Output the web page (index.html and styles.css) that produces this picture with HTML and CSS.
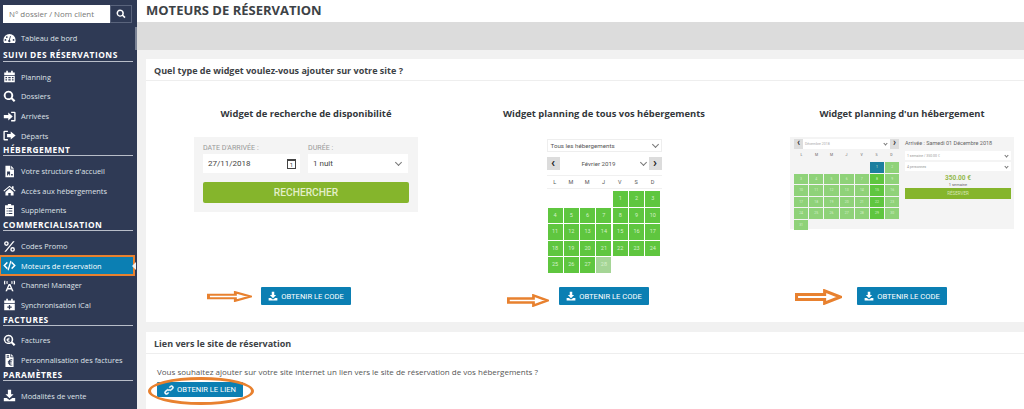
FILE: index.html
```html
<!DOCTYPE html>
<html lang="fr">
<head>
<meta charset="UTF-8" />
<title>Moteurs de réservation</title>
<link rel="stylesheet" href="styles.css">
</head>
<body>
<svg class="sprite" aria-hidden="true">
  <symbol id="i-search" viewBox="0 0 16 16"><path d="M6.7 1a5.7 5.7 0 1 0 3.3 10.3l3.4 3.5 1.9-1.9-3.5-3.4A5.7 5.7 0 0 0 6.7 1zm0 2.2a3.5 3.5 0 1 1 0 7 3.5 3.5 0 0 1 0-7z"/></symbol>
  <symbol id="i-gauge" viewBox="0 0 16 16"><path d="M8 2.5A7.5 7.5 0 0 0 .5 10c0 1.300.3 2.400.9 3.500h13.200c.6-1.100.9-2.200.9-3.500A7.500 7.500 0 0 0 8 2.500zM3 10.800a1.100 1.100 0 1 1 0-2.200 1.100 1.100 0 0 1 0 2.200zm1.700-3.500a1.100 1.100 0 1 1 0-2.200 1.100 1.100 0 0 1 0 2.200zM8 12.700a1.600 1.600 0 0 1-.6-3.100l1.300-4.800 1 .3-1.300 4.700A1.600 1.600 0 0 1 8 12.700zm5-1.900a1.100 1.100 0 1 1 0-2.200 1.100 1.100 0 0 1 0 2.200z"/></symbol>
  <symbol id="i-calendar" viewBox="0 0 16 16"><path d="M4 1h2v2h4V1h2v2h2.500v3h-13V3H4zM1.500 7h13v8h-13zM3 8.500V10h2V8.500zm3.500 0V10h3V8.500zm4.500 0V10h2V8.500zM3 11.500V13h2v-1.500zm3.500 0V13h3v-1.500zm4.500 0V13h2v-1.500z"/></symbol>
  <symbol id="i-in" viewBox="0 0 16 16"><path d="M6.500 3v3H1v4h5.500v3L12 8zM10 2h4a1.500 1.500 0 0 1 1.500 1.500v9A1.500 1.500 0 0 1 14 14h-4v-1.700h3.800V3.700H10z"/></symbol>
  <symbol id="i-out" viewBox="0 0 16 16"><path d="M9.500 3v3H5v4h4.500v3L15.500 8zM6 2H2A1.500 1.500 0 0 0 .5 3.500v9A1.500 1.500 0 0 0 2 14h4v-1.700H2.200V3.700H6z"/></symbol>
  <symbol id="i-file" viewBox="0 0 16 16"><path d="M3 1h6v4.500h4.500V15H3zM10 1l3.500 3.500H10zM5 8v5h1.200v-1.500h1.500v1.500h1V8zm5 3v2h2v-2z"/></symbol>
  <symbol id="i-home" viewBox="0 0 16 16"><path d="M8 2 .5 8.300l.9 1L8 3.800l6.600 5.500.9-1L13 6.200V2.800h-2v1.700zM3 9.800V14h3.500v-3h3v3H13V9.800L8 5.500z"/></symbol>
  <symbol id="i-list" viewBox="0 0 16 16"><path d="M6 0h4v1.500h3.500V15h-11V1.500H6zM4.500 5v1.200h1.200V5zm2.300 0v1.200h4.700V5zM4.500 8v1.200h1.200V8zm2.300 0v1.200h4.700V8zm-2.300 3v1.200h1.200V11zm2.300 0v1.200h4.700V11z"/></symbol>
  <symbol id="i-percent" viewBox="0 0 16 16"><path d="M4.200 1.500a2.900 2.900 0 1 1 0 5.800 2.900 2.900 0 0 1 0-5.800zm0 1.700a1.200 1.200 0 1 0 0 2.400 1.200 1.200 0 0 0 0-2.400zM11.800 8.700a2.900 2.900 0 1 1 0 5.800 2.900 2.900 0 0 1 0-5.800zm0 1.700a1.200 1.200 0 1 0 0 2.400 1.200 1.200 0 0 0 0-2.400zM12.300 1.500h2L3.700 14.500h-2z"/></symbol>
  <symbol id="i-code" viewBox="0 0 16 16"><path d="M4.800 3.500 6 4.800 2.800 8 6 11.200l-1.200 1.300L.3 8zM11.200 3.500 10 4.800 13.200 8 10 11.200l1.200 1.300L15.700 8zM9 2l1.500.4L7 14l-1.500-.4z"/></symbol>
  <symbol id="i-antenna" viewBox="0 0 16 16"><path d="M6.900 6h2.200L13 15h-2l-.7-2H5.700L5 15H3zM8 8l-1.500 3h3zM1.500 2 3 2.300C2.500 3.800 2.500 5 3 6.500L1.500 6.800C1 5 1 3.700 1.500 2zM14.500 2c.5 1.700.5 3 0 4.800L13 6.500c.5-1.500.5-2.700 0-4.200zM4.500 2.500l1.300.3c-.3 1-.3 1.900 0 2.900l-1.300.3c-.4-1.300-.4-2.300 0-3.500zM11.500 2.500c.4 1.200.4 2.200 0 3.500l-1.300-.3c.3-1 .3-1.900 0-2.900z"/></symbol>
  <symbol id="i-sync" viewBox="0 0 16 16"><path d="M4 1h2v2h4V1h2v2h2.500v3h-13V3H4zM1.500 7h13v8h-13zM7.200 8.500v2H5.300v1.400h1.900v2h1.600v-2h1.900v-1.400H8.800v-2z"/></symbol>
  <symbol id="i-euro" viewBox="0 0 16 16"><path d="M6.700 1a5.700 5.700 0 1 0 3.300 10.300l3.400 3.500 1.900-1.900-3.500-3.400A5.700 5.700 0 0 0 6.700 1zm0 1.800a3.900 3.900 0 1 1 0 7.800 3.900 3.900 0 0 1 0-7.800zM7.500 4.500C6.200 4.500 5.300 5.200 5 6.200h-.7V7h.6v.6h-.6v.7H5c.3 1 1.200 1.700 2.500 1.700.4 0 .8-.1 1-.2l-.2-.9c-.2.100-.5.200-.8.200-.6 0-1-.3-1.300-.8h1.600v-.7H6v-.6h1.800v-.8H6.200c.3-.5.700-.8 1.300-.8.300 0 .6.100.8.200l.2-.9c-.2-.1-.6-.200-1-.200z"/></symbol>
  <symbol id="i-bill" viewBox="0 0 16 16"><path d="M3 0h6v4h4v12H3zM10 0l3 3h-3zM4.500 1.500V3h3V1.500zm0 2.500v1h3V4zM10 6.500C8.300 6.500 7.200 7.500 6.800 9H6v1h.7v.8H6v1h.8c.4 1.500 1.500 2.500 3.200 2.500.6 0 1.100-.1 1.500-.3l-.3-1.200c-.3.1-.7.300-1.200.3-.8 0-1.400-.5-1.700-1.300h2.200v-1H8.300V10h2.400V9H8.500c.3-.8.900-1.300 1.700-1.300.4 0 .8.100 1.100.3l.3-1.200c-.4-.2-1-.3-1.600-.3z"/></symbol>
  <symbol id="i-download" viewBox="0 0 16 16"><path d="M6 1h4v5.500h3L8 11.500 3 6.500h3zM1 11h3.500L8 13.500l3.500-2.500H15v4H1z"/></symbol>
  <symbol id="i-link" viewBox="0 0 16 16"><path d="M9.900 1.800a3 3 0 0 1 4.300 4.300l-2 2a3 3 0 0 1-4.300 0l1.100-1.100a1.500 1.500 0 0 0 2.100 0l2-2A1.500 1.500 0 0 0 11 2.900L9.800 4.100a4 4 0 0 0-1.600-.6zM6.100 14.200a3 3 0 0 1-4.300-4.300l2-2a3 3 0 0 1 4.300 0L7 9a1.500 1.500 0 0 0-2.100 0l-2 2A1.500 1.500 0 0 0 5 13.100l1.200-1.200a4 4 0 0 0 1.600.6z" stroke="currentColor" stroke-width="1"/></symbol>
  <symbol id="i-arrow" viewBox="0 0 46 16" preserveAspectRatio="none"><path d="M1.500 5.500H29V1.800L44.500 8 29 14.200v-3.700H1.500z"/></symbol>
</svg>

<aside class="sidebar">
  <form class="search">
    <input class="search-input" type="text" placeholder="N° dossier / Nom client">
    <button class="search-btn" type="button"><svg class="icon"><use href="#i-search"/></svg></button>
  </form>
  <nav class="menu">
    <a class="item"><svg class="icon"><use href="#i-gauge"/></svg>Tableau de bord</a>
    <h3 class="section first">SUIVI DES RÉSERVATIONS</h3>
    <a class="item"><svg class="icon"><use href="#i-calendar"/></svg>Planning</a>
    <a class="item"><svg class="icon"><use href="#i-search"/></svg>Dossiers</a>
    <a class="item"><svg class="icon"><use href="#i-in"/></svg>Arrivées</a>
    <a class="item"><svg class="icon"><use href="#i-out"/></svg>Départs</a>
    <h3 class="section">HÉBERGEMENT</h3>
    <a class="item"><svg class="icon"><use href="#i-file"/></svg>Votre structure d'accueil</a>
    <a class="item"><svg class="icon"><use href="#i-home"/></svg>Accès aux hébergements</a>
    <a class="item"><svg class="icon"><use href="#i-list"/></svg>Suppléments</a>
    <h3 class="section">COMMERCIALISATION</h3>
    <a class="item"><svg class="icon"><use href="#i-percent"/></svg>Codes Promo</a>
    <a class="item active"><svg class="icon"><use href="#i-code"/></svg>Moteurs de réservation</a>
    <a class="item"><svg class="icon"><use href="#i-antenna"/></svg>Channel Manager</a>
    <a class="item"><svg class="icon"><use href="#i-sync"/></svg>Synchronisation iCal</a>
    <h3 class="section">FACTURES</h3>
    <a class="item"><svg class="icon"><use href="#i-euro"/></svg>Factures</a>
    <a class="item"><svg class="icon"><use href="#i-bill"/></svg>Personnalisation des factures</a>
    <h3 class="section">PARAMÈTRES</h3>
    <a class="item"><svg class="icon"><use href="#i-download"/></svg>Modalités de vente</a>
  </nav>
  <span class="scroll-thumb"></span>
</aside>

<main class="main">
  <h1 class="page-title">MOTEURS DE RÉSERVATION</h1>
  <div class="band"></div>

  <section class="card">
    <h2 class="card-title">Quel type de widget voulez-vous ajouter sur votre site ?</h2>
    <div class="widgets">

      <div class="widget">
        <h3 class="widget-title">Widget de recherche de disponibilité</h3>
        <div class="preview">
          <div class="search-widget">
            <div class="sw-fields">
              <label class="sw-label">DATE D'ARRIVÉE :<span class="sw-input">27/11/2018<i class="mini-cal">1</i></span></label>
              <label class="sw-label">DURÉE :<span class="sw-input">1 nuit<i class="chev"></i></span></label>
            </div>
            <div class="sw-btn">RECHERCHER</div>
          </div>
        </div>
        <div class="action">
          <svg class="arrow arrow-1"><use href="#i-arrow"/></svg>
          <a class="btn"><svg class="icon"><use href="#i-download"/></svg>OBTENIR LE CODE</a>
        </div>
      </div>

      <div class="widget">
        <h3 class="widget-title">Widget planning de tous vos hébergements</h3>
        <div class="preview">
          <div class="planning">
            <div class="pl-select">Tous les hébergements<i class="chev"></i></div>
            <div class="pl-nav">
              <span class="pl-arrow">‹</span>
              <span class="pl-month">Février 2019</span>
              <i class="chev"></i>
              <span class="pl-arrow">›</span>
            </div>
            <div class="pl-days"><span>L</span><span>M</span><span>M</span><span>J</span><span>V</span><span>S</span><span>D</span></div>
            <div class="pl-grid">
              <span class="off"></span><span class="off"></span><span class="off"></span><span class="off"></span>
              <span>1</span><span>2</span><span>3</span>
              <span>4</span><span>5</span><span>6</span><span>7</span><span>8</span><span>9</span><span>10</span>
              <span>11</span><span>12</span><span>13</span><span>14</span><span>15</span><span>16</span><span>17</span>
              <span>18</span><span>19</span><span>20</span><span>21</span><span>22</span><span>23</span><span>24</span>
              <span>25</span><span>26</span><span>27</span><span class="pale">28</span>
            </div>
          </div>
        </div>
        <div class="action">
          <svg class="arrow arrow-2"><use href="#i-arrow"/></svg>
          <a class="btn"><svg class="icon"><use href="#i-download"/></svg>OBTENIR LE CODE</a>
        </div>
      </div>

      <div class="widget">
        <h3 class="widget-title">Widget planning d'un hébergement</h3>
        <div class="preview">
          <div class="single">
            <div class="si-cal">
              <div class="si-nav"><span class="si-arrow">‹</span><span class="si-month">Décembre 2018</span><i class="chev tiny"></i><span class="si-arrow">›</span></div>
              <div class="si-days"><span>L</span><span>M</span><span>M</span><span>J</span><span>V</span><span>S</span><span>D</span></div>
              <div class="si-grid">
                <span class="off"></span><span class="off"></span><span class="off"></span><span class="off"></span><span class="off"></span><span class="start">1</span><span>2</span>
                <span>3</span><span>4</span><span>5</span><span>6</span><span>7</span><span class="sel">8</span><span>9</span>
                <span>10</span><span>11</span><span>12</span><span>13</span><span>14</span><span class="sel">15</span><span>16</span>
                <span>17</span><span>18</span><span>19</span><span>20</span><span>21</span><span class="sel">22</span><span>23</span>
                <span>24</span><span>25</span><span>26</span><span>27</span><span>28</span><span class="sel">29</span><span>30</span>
                <span>31</span>
              </div>
            </div>
            <div class="si-side">
              <div class="si-title">Arrivée : Samedi 01 Décembre 2018</div>
              <div class="si-select">1 semaine / 350.00 €<i class="chev tiny"></i></div>
              <div class="si-select">4 personnes<i class="chev tiny"></i></div>
              <div class="si-price">350.00 €</div>
              <div class="si-sub">1 semaine</div>
              <div class="si-btn">RÉSERVER</div>
            </div>
          </div>
        </div>
        <div class="action">
          <svg class="arrow arrow-3"><use href="#i-arrow"/></svg>
          <a class="btn"><svg class="icon"><use href="#i-download"/></svg>OBTENIR LE CODE</a>
        </div>
      </div>

    </div>
  </section>

  <section class="card link-card">
    <h2 class="card-title">Lien vers le site de réservation</h2>
    <div class="link-body">
      <p class="link-text">Vous souhaitez ajouter sur votre site internet un lien vers le site de réservation de vos hébergements ?</p>
      <div class="link-action">
        <a class="btn btn-link"><svg class="icon"><use href="#i-link"/></svg>OBTENIR LE LIEN</a>
        <span class="ring"></span>
      </div>
    </div>
  </section>
</main>
</body>
</html>
```

FILE: styles.css
```css
:root {
  --navy: #2f3a55;
  --blue: #0b7fb3;
  --green: #5fc63f;
  --green-pale: #8fd279;
  --olive: #85b52c;
  --orange: #e8812f;
  --text: #3a3f45;
}

* {
  box-sizing: border-box;
}

html, body {
  height: 100%;
}

body {
  margin: 0;
  display: flex;
  overflow: hidden;
  font-family: "Open Sans", sans-serif;
  color: var(--text);
  background: #f1f1f1;
}

.sprite {
  display: none;
}

h1, h2, h3, p {
  margin: 0;
}

/* sidebar */
.sidebar {
  position: relative;
  flex: 0 0 137px;
  background: var(--navy);
  color: #fff;
  padding-top: 5px;
}

.search {
  display: flex;
  margin: 0 5px 0 3px;
  height: 18px;
}

.search-input {
  width: 107px;
  height: 18px;
  border: 0;
  padding: 0 0 0 6px;
  font: 7.9px "Open Sans", sans-serif;
  background: #fff;
}

.search-input::placeholder {
  color: #777;
  opacity: 1;
}

.search-btn {
  flex: 1;
  padding: 0;
  border: 1px solid #5a647c;
  background: var(--navy);
  color: #fff;
}

.search-btn .icon {
  width: 10px;
  height: 10px;
  margin: 0;
}

.menu {
  display: flex;
  flex-direction: column;
  padding-top: 5.5px;
}

.item {
  display: flex;
  align-items: center;
  height: 19.6px;
  padding-left: 3px;
  font-size: 7.4px;
  white-space: nowrap;
  color: #dfe2e8;
}

.icon {
  width: 13px;
  height: 13px;
  margin-right: 5px;
  fill: currentColor;
  flex: none;
}

.item .icon {
  color: #fff;
}

.item.active {
  position: relative;
  background: var(--blue);
  outline: 2px solid var(--orange);
  outline-offset: -1px;
  margin-right: 3px;
  color: #fff;
}

.item.active::after {
  content: "";
  position: absolute;
  right: -2px;
  top: 6px;
  border: 4px solid transparent;
  border-right-color: #f1f1f1;
  border-left: 0;
}

.section {
  height: 11px;
  margin: 0 4px 5px 3px;
  border-bottom: 1px solid #b8bdc9;
  font-size: 8.4px;
  line-height: 9px;
  font-weight: 700;
  letter-spacing: .5px;
  white-space: nowrap;
}

.section.first {
  height: 14px;
  line-height: 14px;
}

.scroll-thumb {
  position: absolute;
  right: 0;
  top: 27px;
  width: 2px;
  height: 23px;
  background: #7c8496;
}

/* main */
.main {
  flex: 1;
  min-width: 0;
  overflow: hidden;
}

.page-title {
  height: 22px;
  padding-left: 9px;
  background: #fff;
  font-size: 13px;
  line-height: 21px;
  font-weight: 700;
  color: #3d4246;
}

.band {
  height: 28px;
  background: #dcdcdc;
}

.card {
  width: 910px;
  margin: 9px 0 0 9px;
  height: 263px;
  background: #fff;
}

.card-title {
  height: 22px;
  padding-left: 8px;
  border-bottom: 1px solid #eee;
  font-size: 9px;
  line-height: 24px;
  font-weight: 700;
  color: #3d4246;
}

.widgets {
  display: grid;
  grid-template-columns: repeat(3, 298px);
  padding: 0 0 0 11px;
}

.widget {
  display: flex;
  flex-direction: column;
  align-items: center;
}

.widget-title {
  height: 14px;
  margin-top: 26px;
  font-size: 9.4px;
  line-height: 14px;
  font-weight: 700;
  white-space: nowrap;
  color: #33373b;
}

.preview {
  height: 140px;
  margin-top: 16px;
  margin-bottom: 10px;
}

.action {
  position: relative;
}

.btn {
  display: flex;
  align-items: center;
  justify-content: center;
  width: 90px;
  height: 18px;
  border-radius: 1px;
  background: var(--blue);
  color: #fff;
  font-family: Roboto, sans-serif;
  font-size: 7.6px;
  white-space: nowrap;
}

.btn .icon {
  width: 10px;
  height: 10px;
  margin-right: 3px;
}

.arrow {
  position: absolute;
  height: 11px;
  fill: #fff;
  stroke: var(--orange);
  stroke-width: 3;
}

.arrow-1 {
  left: -54px;
  top: 4px;
  width: 45px;
}

.arrow-2 {
  left: -52px;
  top: 7px;
  width: 42px;
  height: 13px;
}

.arrow-3 {
  left: -62px;
  top: 2px;
  width: 47px;
  height: 16px;
}

/* chevron used in the small selects */
.chev {
  width: 5px;
  height: 5px;
  border-right: 1px solid #777;
  border-bottom: 1px solid #777;
  transform: rotate(45deg);
  margin: -2px 3px 0 auto;
  flex: none;
}

.chev.tiny {
  width: 3px;
  height: 3px;
  margin-top: -1px;
}

/* search widget */
.search-widget {
  width: 224px;
  height: 75px;
  padding: 4px 9px 0;
  background: #f4f4f4;
  font-family: Roboto, sans-serif;
}

.sw-fields {
  display: grid;
  grid-template-columns: 97px 100px;
  gap: 8px;
}

.sw-label {
  display: block;
  font-size: 7.1px;
  line-height: 13px;
  color: #999;
}

.sw-input {
  display: flex;
  align-items: center;
  height: 19px;
  padding: 0 4px 0 5px;
  background: #fff;
  font-size: 8px;
  color: #444;
}

.mini-cal {
  width: 9px;
  height: 10px;
  margin-left: auto;
  border: 1px solid #444;
  border-top-width: 2px;
  font-size: 6px;
  line-height: 7px;
  font-style: normal;
  text-align: center;
}

.sw-btn {
  height: 21px;
  margin-top: 9px;
  border-radius: 2px;
  background: var(--olive);
  color: #e3efc8;
  font-size: 10.2px;
  font-weight: 500;
  line-height: 21px;
  text-align: center;
}

/* month planning */
.planning {
  width: 115px;
  margin-top: 2px;
  font-family: Roboto, sans-serif;
  color: #555;
}

.pl-select {
  display: flex;
  align-items: center;
  height: 13px;
  padding-left: 3px;
  border: 1px solid #eee;
  font-size: 6.2px;
}

.pl-nav {
  display: flex;
  align-items: center;
  height: 13px;
  margin-top: 5px;
  font-size: 6.2px;
}

.pl-arrow {
  width: 13px;
  height: 13px;
  background: #dcdcdc;
  color: #222;
  font-size: 13px;
  font-weight: 700;
  line-height: 11px;
  text-align: center;
}

.pl-month {
  margin-left: 22px;
}

.pl-days {
  display: grid;
  grid-template-columns: repeat(7, 16.3px);
  height: 14px;
  margin-top: 5px;
  border-top: 1px solid #f0f0f0;
  border-bottom: 1px solid #f0f0f0;
  font-size: 5.5px;
  line-height: 12px;
  text-align: center;
}

.pl-grid {
  display: grid;
  grid-template-columns: repeat(7, 15px);
  grid-auto-rows: 15.5px;
  gap: 1px 1.300px;
  margin: 2px 0 0 1px;
}

.pl-grid span {
  background: var(--green);
  color: #d5f0cb;
  font-size: 5.5px;
  line-height: 15px;
  text-align: center;
}

.pl-grid .off {
  background: none;
}

.pl-grid .pale {
  background: #a5d596;
}

/* single unit planning */
.single {
  display: flex;
  width: 224px;
  height: 92px;
  padding: 2px 3px 0 4px;
  background: #f4f4f4;
  font-family: Roboto, sans-serif;
  color: #666;
}

.si-cal {
  width: 105px;
}

.si-nav {
  display: flex;
  align-items: center;
  height: 10px;
  background: #fff;
  font-size: 3.5px;
  color: #aaa;
}

.si-arrow {
  width: 9px;
  height: 10px;
  background: #ddd;
  color: #333;
  font-size: 10px;
  font-weight: 700;
  line-height: 8px;
  text-align: center;
}

.si-month {
  margin-left: 2px;
}

.si-days {
  display: grid;
  grid-template-columns: repeat(7, 15px);
  height: 13px;
  font-size: 3.5px;
  line-height: 13px;
  text-align: center;
}

.si-grid {
  display: grid;
  grid-template-columns: repeat(7, 14.200px);
  grid-auto-rows: 10.500px;
  gap: 1px;
}

.si-grid span {
  background: var(--green-pale);
  color: #d5f0cb;
  font-size: 3.5px;
  line-height: 10px;
  text-align: center;
}

.si-grid .off {
  background: none;
}

.si-grid .start {
  background: #1c7f9f;
}

.si-grid .sel {
  background: var(--green);
}

.si-side {
  flex: 1;
  margin-left: 6px;
}

.si-title {
  height: 12px;
  font-size: 5.5px;
  line-height: 8px;
}

.si-select {
  display: flex;
  align-items: center;
  height: 9px;
  margin-bottom: 2px;
  padding-left: 2px;
  background: #fff;
  font-size: 3.5px;
  color: #999;
}

.si-price {
  margin-top: 4px;
  font-size: 6.500px;
  line-height: 7px;
  font-weight: 700;
  text-align: center;
  color: #93b94d;
}

.si-sub {
  font-size: 4px;
  line-height: 5px;
  text-align: center;
}

.si-btn {
  height: 11px;
  margin-top: 1px;
  background: var(--olive);
  color: #d6e6b5;
  font-size: 4.5px;
  line-height: 11px;
  text-align: center;
}

/* link card */
.link-card {
  margin-top: 10px;
  height: 90px;
}

.link-body {
  padding: 11px 0 0 11px;
}

.link-text {
  font-size: 8px;
  line-height: 13px;
  color: #555;
}

.link-action {
  position: relative;
  margin-top: 4px;
}

.btn-link {
  width: 86px;
  height: 15px;
  background: var(--blue);
}

.ring {
  position: absolute;
  left: -9px;
  top: -5px;
  width: 106px;
  height: 28px;
  border: 3px solid var(--orange);
  border-radius: 50%;
}
```
